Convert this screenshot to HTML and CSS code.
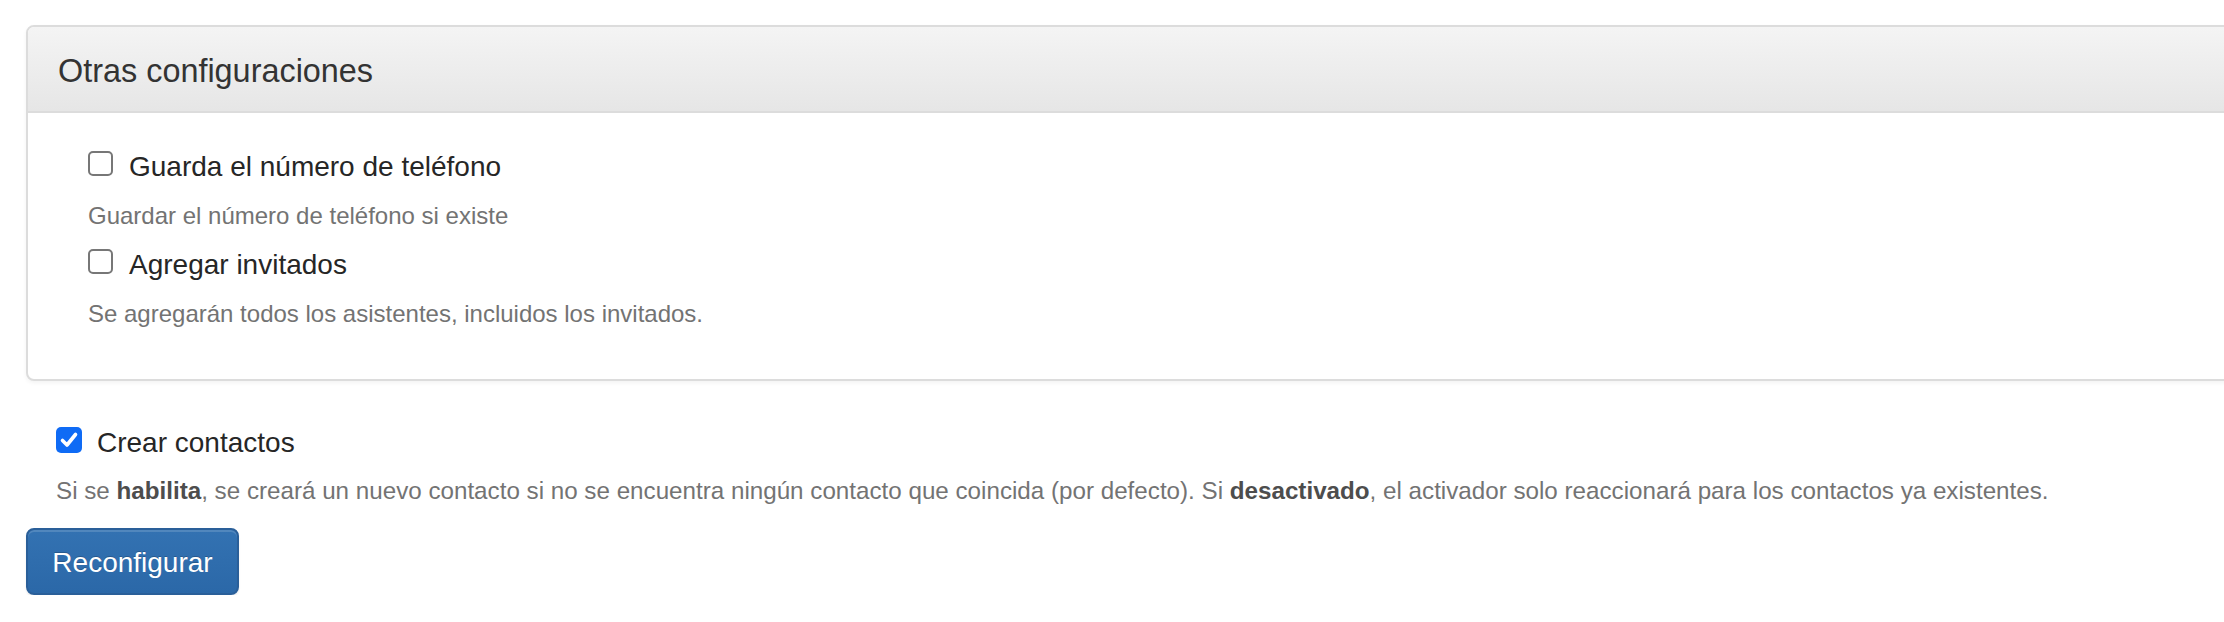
FILE: index.html
```html
<!DOCTYPE html>
<html lang="es">
<head>
<meta charset="utf-8">
<title>Otras configuraciones</title>
<link rel="stylesheet" href="styles.css">
</head>
<body>
<div class="page">
  <div class="panel">
    <div class="panel-heading">
      <h3 class="panel-title">Otras configuraciones</h3>
    </div>
    <div class="panel-body">
      <div class="field">
        <label class="check">
          <span class="box"></span>
          <span class="check-text">Guarda el número de teléfono</span>
        </label>
        <p class="help">Guardar el número de teléfono si existe</p>
      </div>
      <div class="field">
        <label class="check">
          <span class="box"></span>
          <span class="check-text">Agregar invitados</span>
        </label>
        <p class="help">Se agregarán todos los asistentes, incluidos los invitados.</p>
      </div>
    </div>
  </div>

  <div class="field outer">
    <label class="check">
      <span class="box checked">
        <svg viewBox="0 0 26 26" width="26" height="26"><path d="M6.5 13.5 L11 18 L19.5 7.5" fill="none" stroke="#fff" stroke-width="3.6" stroke-linecap="round" stroke-linejoin="round"/></svg>
      </span>
      <span class="check-text">Crear contactos</span>
    </label>
    <p class="help">Si se <strong>habilita</strong>, se creará un nuevo contacto si no se encuentra ningún contacto que coincida (por defecto). Si <strong>desactivado</strong>, el activador solo reaccionará para los contactos ya existentes.</p>
  </div>

  <button class="btn-primary" type="button">Reconfigurar</button>
</div>
</body>
</html>
```

FILE: styles.css
```css
html, body {
  margin: 0;
  padding: 0;
  background: #ffffff;
  overflow: hidden;
}

body {
  font-family: "Liberation Sans", Arial, Helvetica, sans-serif;
  color: #333333;
}

.page {
  padding: 25px 0 0 26px;
}

.panel {
  margin-right: -60px;
  border: 2px solid #dcdcdc;
  border-radius: 8px;
  background: #ffffff;
  box-shadow: 0 2px 4px rgba(0, 0, 0, 0.05);
  overflow: hidden;
}

.panel-heading {
  padding: 27px 30px 22px;
  background: linear-gradient(to bottom, #f4f4f4 0%, #e6e6e6 100%);
  border-bottom: 2px solid #dcdcdc;
}

.panel-title {
  margin: 0;
  font-size: 32.4px;
  line-height: 35px;
  font-weight: normal;
  color: #333333;
}

.panel-body {
  padding: 34px 30px 48px 60px;
}

.field + .field {
  margin-top: 12px;
}

.check {
  display: flex;
  align-items: flex-start;
  gap: 16px;
  font-size: 28px;
  line-height: 40px;
  color: #262626;
}

.box {
  flex: none;
  box-sizing: border-box;
  width: 25px;
  height: 25px;
  margin-top: 4px;
  border: 2px solid #777777;
  border-radius: 5px;
  background: #ffffff;
}

.box.checked {
  width: 26px;
  height: 26px;
  border: none;
  background: #0f6bf5;
  display: flex;
}

.box.checked svg {
  display: block;
}

.help {
  margin: 12px 0 0;
  font-size: 24px;
  line-height: 34px;
  color: #737373;
}

.outer .help {
  font-size: 24.2px;
}

.help strong {
  color: #4d4d4d;
  font-weight: bold;
}

.outer {
  margin-top: 42px;
  padding-left: 30px;
}

.outer .check {
  gap: 15px;
}

.outer .help {
  margin-top: 11px;
}

.btn-primary {
  display: block;
  margin-top: 20px;
  box-sizing: border-box;
  width: 213px;
  height: 67px;
  padding: 12px 0 10px;
  font-family: "Liberation Sans", Arial, Helvetica, sans-serif;
  font-size: 28px;
  line-height: 41px;
  color: #ffffff;
  text-shadow: 0 -1px 0 rgba(0, 0, 0, 0.2);
  background: linear-gradient(to bottom, #3372b2 0%, #2b68a8 100%);
  border: 2px solid #2a5f99;
  border-radius: 8px;
  box-shadow: inset 0 2px 0 rgba(255, 255, 255, 0.15), 0 2px 2px rgba(0, 0, 0, 0.075);
}
```
